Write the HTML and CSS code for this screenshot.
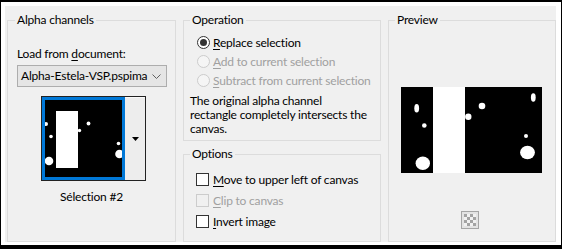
FILE: index.html
```html
<!DOCTYPE html>
<html>
<head>
<meta charset="utf-8">
<link rel="stylesheet" href="styles.css">
</head>
<body>
<div class="frame">
  <div class="dialog">
    <fieldset class="group g-alpha">
      <legend>Alpha channels</legend>
      <div class="alpha-body">
        <div class="label">Load from <u>d</u>ocument:</div>
        <div class="combo">
          <span class="combo-text">Alpha-Estela-VSP.pspima</span>
          <svg class="chev" width="9" height="5" viewBox="0 0 9 5"><polyline points="0.5,0.5 4.5,4.5 8.5,0.5" fill="none" stroke="#606060" stroke-width="1"/></svg>
        </div>
        <div class="thumbwidget">
          <div class="thumb">
            <svg width="77" height="77" viewBox="0 0 77 77">
              <rect width="77" height="77" fill="#000"/>
              <g fill="#fff">
                <rect x="11" y="11" width="22" height="57"/>
                <circle cx="1" cy="24" r="2"/>
                <circle cx="6" cy="36.5" r="1.8"/>
                <circle cx="43.5" cy="23.5" r="1.9"/>
                <circle cx="34.5" cy="30.5" r="1.7"/>
                <circle cx="4" cy="61" r="4.3"/>
                <circle cx="73.5" cy="43.5" r="1.8"/>
                <circle cx="74.5" cy="54" r="4.3"/>
              </g>
            </svg>
          </div>
          <div class="thumbbtn">
            <svg width="7" height="4" viewBox="0 0 7 4"><polygon points="0,0 7,0 3.5,4" fill="#000"/></svg>
          </div>
        </div>
        <div class="caption">Sélection #2</div>
      </div>
    </fieldset>

    <div class="col2">
      <fieldset class="group g-op">
        <legend>Operation</legend>
        <div class="op-body">
          <div class="opt"><span class="radio checked"></span><span><u>R</u>eplace selection</span></div>
          <div class="opt disabled"><span class="radio"></span><span><u>A</u>dd to current selection</span></div>
          <div class="opt disabled"><span class="radio"></span><span><u>S</u>ubtract from current selection</span></div>
          <p class="desc">The original alpha channel<br>rectangle completely intersects the<br>canvas.</p>
        </div>
      </fieldset>
      <fieldset class="group g-options">
        <legend>Options</legend>
        <div class="options-body">
          <div class="chk"><span class="box"></span><span><u>M</u>ove to upper left of canvas</span></div>
          <div class="chk disabled"><span class="box"></span><span><u>C</u>lip to canvas</span></div>
          <div class="chk"><span class="box"></span><span><u>I</u>nvert image</span></div>
        </div>
      </fieldset>
    </div>

    <fieldset class="group g-preview">
      <legend>Preview</legend>
      <div class="preview-body">
        <svg class="preview" width="141" height="86" viewBox="0 0 141 86">
          <rect width="141" height="86" fill="#000"/>
          <g fill="#fff">
            <rect x="32" y="0" width="32" height="86"/>
            <ellipse cx="15.7" cy="21.3" rx="2.4" ry="4.3"/>
            <circle cx="23.3" cy="38.5" r="2.3"/>
            <ellipse cx="21.8" cy="76.3" rx="7.2" ry="6.7"/>
            <circle cx="67.3" cy="29.7" r="3.2"/>
            <circle cx="81" cy="19" r="3.3"/>
            <ellipse cx="132.3" cy="10.5" rx="2.4" ry="4.2"/>
            <circle cx="125" cy="49" r="2"/>
            <ellipse cx="126.5" cy="65.5" rx="7.4" ry="6.8"/>
          </g>
        </svg>
        <div class="checker"><div class="checker-in"></div></div>
      </div>
    </fieldset>
  </div>
</div>
</body>
</html>
```

FILE: styles.css
```css
* { box-sizing: border-box; }

body {
  margin: 0;
  background: #000;
  font-family: Lato, "Noto Sans", sans-serif;
  font-size: 12px;
  line-height: 16px;
  letter-spacing: -0.2px;
  color: #000;
}

u { text-decoration: underline; text-underline-offset: 2px; }

.frame {
  width: 562px;
  height: 249px;
  border-style: solid;
  border-color: #000;
  border-width: 2px 1px 4px 1px;
  background: #fff;
}

.dialog {
  height: 100%;
  border-style: solid;
  border-color: #fff;
  border-width: 4px 5px 3px 4px;
  background: #f0f0f0;
  display: flex;
  align-items: flex-start;
  gap: 7px;
  padding-left: 2px;
}

.group {
  margin: 0;
  padding: 0;
  border: 1px solid #dcdcdc;
  min-width: 0;
}

.group legend {
  padding: 0 2px;
  margin-left: 6px;
  line-height: 16px;
}

/* Alpha channels */
.g-alpha {
  width: 169px;
  height: 230px;
  margin-top: 6px;
}
.g-alpha legend { margin-left: 7px; }

.alpha-body { padding-left: 9px; }

.label { margin-top: 18px; }

.combo {
  margin-top: 3px;
  width: 150px;
  height: 22px;
  border: 1px solid #adadad;
  background: #e5e5e5;
  display: flex;
  align-items: center;
}
.combo-text {
  padding-left: 3px;
  white-space: nowrap;
}
.chev { margin-left: auto; margin-right: 5px; flex: none; }

.thumbwidget {
  margin-top: 9px;
  margin-left: 24px;
  width: 105px;
  height: 85px;
  border: 1px solid #222;
  display: flex;
}
.thumb {
  width: 83px;
  height: 83px;
  border: 3px solid #0078d7;
}
.thumb svg { display: block; }
.thumbbtn {
  flex: 1;
  background: #ededed;
  border-top: 1px solid #fafafa;
  display: flex;
  align-items: center;
  justify-content: center;
}
.thumbbtn svg { display: block; }

.caption {
  margin-top: 8px;
  margin-left: -9px;
  text-align: center;
}

/* Column 2 */
.col2 {
  width: 198px;
  margin-top: 6px;
  display: flex;
  flex-direction: column;
  gap: 5px;
}

.g-op { height: 129px; }
.op-body { padding-top: 5px; }

.opt {
  height: 19px;
  display: flex;
  align-items: center;
  padding-left: 13px;
}
.radio {
  width: 13px;
  height: 13px;
  border: 1px solid #333;
  border-radius: 50%;
  background: #fff;
  margin-right: 3px;
  display: flex;
  align-items: center;
  justify-content: center;
  flex: none;
}
.radio.checked::after {
  content: "";
  width: 7px;
  height: 7px;
  border-radius: 50%;
  background: #333;
}
.disabled { color: #a0a0a0; }
.opt.disabled .radio { border-color: #cccccc; background: #f5f5f5; }

.desc {
  margin: 4px 0 0 0;
  padding-left: 6px;
  line-height: 14px;
}

.g-options { height: 96px; }
.options-body { padding-top: 7px; }

.chk {
  height: 21px;
  display: flex;
  align-items: center;
  padding-left: 12px;
}
.box {
  width: 13px;
  height: 13px;
  border: 1px solid #333;
  background: #fff;
  margin-right: 4px;
  flex: none;
}
.chk.disabled .box { border-color: #cccccc; background: #f0f0f0; }

/* Preview */
.g-preview {
  width: 168px;
  height: 230px;
  margin-top: 6px;
}
.preview-body { display: flex; flex-direction: column; }
.preview {
  display: block;
  margin-top: 59px;
  margin-left: 12px;
}
.checker {
  margin-top: 38px;
  margin-left: 72px;
  width: 18px;
  height: 18px;
  border: 1px solid #a6a6a6;
  background: #e4e4e4;
  padding: 2px;
}
.checker-in {
  width: 12px;
  height: 12px;
  background: repeating-conic-gradient(#f2f2f2 0 25%, #a4a4a4 0 50%) 0 0 / 6px 6px;
}
```
